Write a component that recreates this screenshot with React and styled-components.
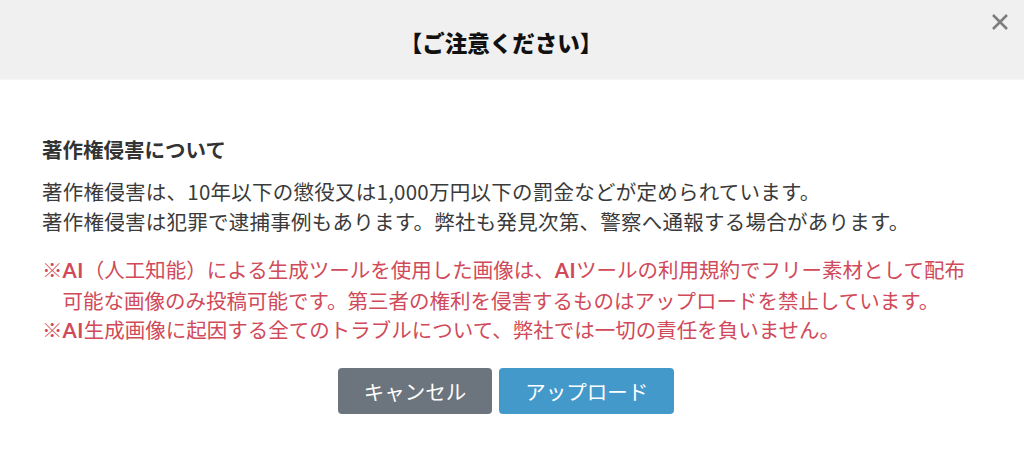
import React from "react";
import styled, { createGlobalStyle } from "styled-components";

const Global = createGlobalStyle`
  html, body { margin: 0; padding: 0; background: #ffffff; }
  body { font-family: "Noto Sans CJK JP", "Noto Sans", sans-serif; }
`;

const Modal = styled.div`
  width: 1024px;
  height: 460px;
  background: #ffffff;
  display: flex;
  flex-direction: column;
  position: relative;
`;

const Header = styled.div`
  height: 80px;
  background: #f0f0f0;
  display: flex;
  align-items: center;
  justify-content: center;
  padding-right: 22px;
  border-bottom: 1px solid #f6f6f6;
  box-sizing: border-box;
`;

const Title = styled.h1`
  margin: 0;
  font-size: 22.5px;
  font-weight: 900;
  color: #111;
  padding-top: 4px;
`;

const Close = styled.button`
  position: absolute;
  top: 12px;
  right: 14px;
  width: 20px;
  height: 20px;
  padding: 0;
  border: none;
  background: transparent;
  display: flex;
  align-items: center;
  justify-content: center;
  cursor: pointer;
`;

const Body = styled.div`
  padding: 55px 42px 0 42px;
  display: flex;
  flex-direction: column;
`;

const Heading = styled.h2`
  margin: 0 0 13px 0;
  font-size: 20.5px;
  font-weight: 700;
  color: #333;
  line-height: 29px;
`;

const Paragraph = styled.p`
  margin: 0 0 ${(p) => p.$mb || 0}px 0;
  font-size: 20.5px;
  line-height: 29.5px;
  color: ${(p) => (p.$warn ? "#d04a5a" : "#3a3a3a")};
  letter-spacing: ${(p) => (p.$warn ? "0" : "0.25px")};
`;

const Line = styled.span`
  display: block;
  white-space: nowrap;
  padding-left: ${(p) => (p.$indent ? "1em" : "0")};
`;

const Strong = styled.b`
  font-family: "Lato", "Noto Sans", sans-serif;
  font-weight: 700;
  letter-spacing: 0.5px;
`;

const Actions = styled.div`
  display: flex;
  justify-content: center;
  gap: 7px;
  margin-top: 22px;
  padding-right: 12px;
`;

const Button = styled.button`
  height: 46px;
  padding: 0 ${(p) => p.$px}px;
  border: none;
  border-radius: 4px;
  background: ${(p) => p.$bg};
  color: #ffffff;
  font-family: "Noto Sans CJK JP", sans-serif;
  font-size: 20.5px;
  cursor: pointer;
`;

export default function App() {
  return (
    <>
      <Global />
      <Modal>
        <Header>
          <Title>【ご注意ください】</Title>
        </Header>
        <Close aria-label="close">
          <svg width="18" height="18" viewBox="0 0 18 18">
            <path d="M2 2 L16 16 M16 2 L2 16" stroke="#7d7d7d" strokeWidth="2.6" strokeLinecap="butt" />
          </svg>
        </Close>
        <Body>
          <Heading>著作権侵害について</Heading>
          <Paragraph $mb={19}>
            <Line>著作権侵害は、10年以下の懲役又は1,000万円以下の罰金などが定められています。</Line>
            <Line>著作権侵害は犯罪で逮捕事例もあります。弊社も発見次第、警察へ通報する場合があります。</Line>
          </Paragraph>
          <Paragraph $warn>
            <Line>※<Strong>AI</Strong>（人工知能）による生成ツールを使用した画像は、<Strong>AI</Strong>ツールの利用規約でフリー素材として配布</Line>
            <Line $indent>可能な画像のみ投稿可能です。第三者の権利を侵害するものはアップロードを禁止しています。</Line>
            <Line>※<Strong>AI</Strong>生成画像に起因する全てのトラブルについて、弊社では一切の責任を負いません。</Line>
          </Paragraph>
          <Actions>
            <Button $bg="#6c757d" $px={26}>キャンセル</Button>
            <Button $bg="#4499cb" $px={26}>アップロード</Button>
          </Actions>
        </Body>
      </Modal>
    </>
  );
}
